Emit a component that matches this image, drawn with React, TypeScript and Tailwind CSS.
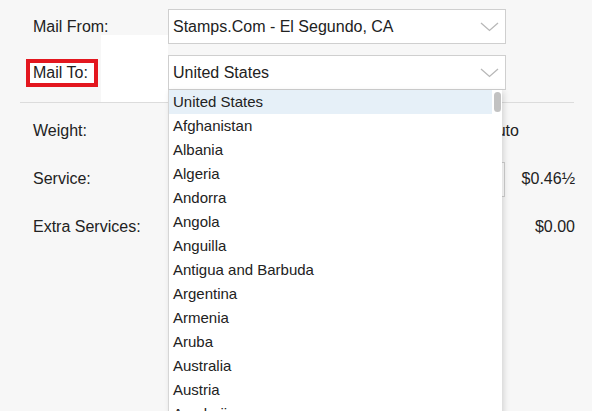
import React from "react";

const countries = [
  "United States",
  "Afghanistan",
  "Albania",
  "Algeria",
  "Andorra",
  "Angola",
  "Anguilla",
  "Antigua and Barbuda",
  "Argentina",
  "Armenia",
  "Aruba",
  "Australia",
  "Austria",
  "Azerbaijan",
];

function Chevron() {
  return (
    <svg width="19" height="10" viewBox="0 0 19 10" className="shrink-0">
      <path d="M1 1 L9.5 8.5 L18 1" fill="none" stroke="#b8b8b8" strokeWidth="1.3" />
    </svg>
  );
}

function Select({ value }: { value: string }) {
  return (
    <div className="flex h-[35px] w-[338px] items-center justify-between border border-[#cfcfcf] bg-white pl-[4px] pr-[6px]">
      <span>{value}</span>
      <Chevron />
    </div>
  );
}

export default function App() {
  return (
    <div
      className="relative h-[411px] w-[592px] overflow-hidden bg-[#f7f7f7] text-[16px] text-[#222]"
      style={{ fontFamily: '"Liberation Sans", Arial, Helvetica, sans-serif' }}
    >
      {/* stray white block */}
      <div className="absolute left-[101px] top-[35px] h-[67px] w-[67px] bg-white" />

      <div className="relative flex flex-col pt-[9px]">
        <div className="flex items-center pl-[26px]">
          <div className="w-[142px] pl-[7px]">Mail From:</div>
          <Select value="Stamps.Com - El Segundo, CA" />
        </div>
        <div className="mt-[11px] flex items-center pl-[26px]">
          <div className="w-[142px]">
            <span className="inline-flex h-[28px] w-[72px] items-center border-4 border-[#e3171f] bg-white pl-[3px]">
              Mail To:
            </span>
          </div>
          <Select value="United States" />
        </div>

        <div className="ml-[20px] mr-[18px] mt-[12px] h-px bg-[#dcdcdc]" />

        <div className="mt-[4px] flex h-[48px] items-center pl-[33px] pr-[17px]">
          <div className="w-[135px]">Weight:</div>
          <div className="flex-1" />
          <div className="w-[89px]">Auto</div>
        </div>
        <div className="flex h-[48px] items-center pl-[33px] pr-[17px]">
          <div className="w-[135px]">Service:</div>
          <div className="flex-1">
            <div className="h-[35px] w-[337px] border border-[#cfcfcf] bg-white" />
          </div>
          <div>$0.46½</div>
        </div>
        <div className="flex h-[48px] items-center pl-[33px] pr-[17px]">
          <div className="w-[135px]">Extra Services:</div>
          <div className="flex-1" />
          <div>$0.00</div>
        </div>
      </div>

      {/* open dropdown list */}
      <div className="absolute left-[168px] top-[90px] h-[340px] w-[334px] border-l border-[#d6d6d6] bg-white text-[15px] shadow-[2px_2px_6px_rgba(0,0,0,0.14)]">
        <div className="w-[323px]">
          {countries.map((c, i) => (
            <div
              key={c}
              className={`h-[24px] pl-[4px] leading-[24px] ${i === 0 ? "bg-[#e6f0f8]" : ""}`}
            >
              {c}
            </div>
          ))}
        </div>
        <div className="absolute left-[325px] top-[2px] h-[20px] w-[7px] rounded-full bg-[#c2c2c2]" />
      </div>
    </div>
  );
}
